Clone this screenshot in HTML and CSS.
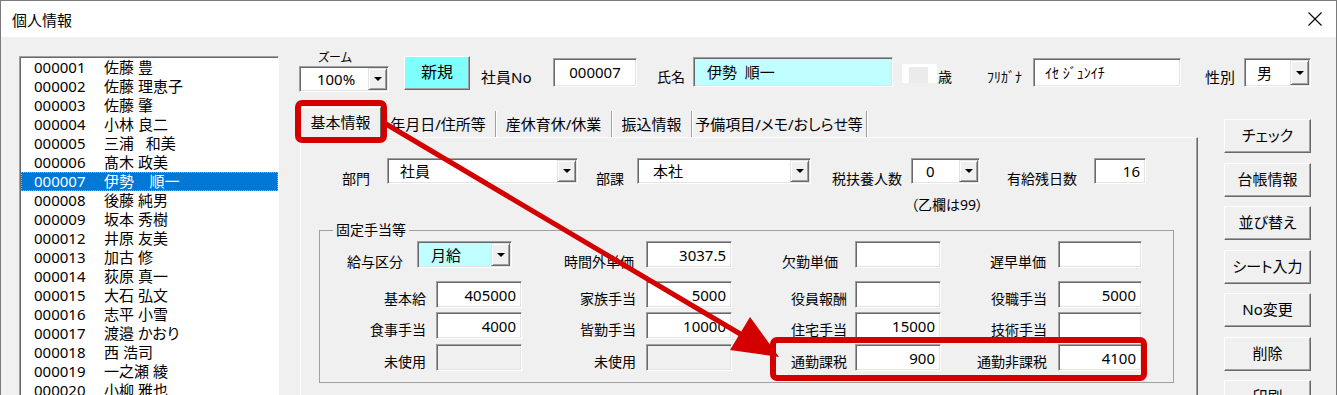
FILE: index.html
```html
<!DOCTYPE html>
<html lang="ja">

<head>
    <meta charset="UTF-8">
    <title>個人情報</title>
    <link rel="stylesheet" href="styles.css">
</head>

<body>
    <div class="window">
        <div class="titlebar">
            <span class="title">個人情報</span>
            <svg class="close" width="14" height="14" viewBox="0 0 14 14">
                <path d="M0.5 0.5L13.5 13.5M13.5 0.5L0.5 13.5" stroke="#000" stroke-width="1.1" fill="none" />
            </svg>
        </div>
        <div class="client">
            <ul class="list" id="list"></ul>

            <div class="main">
                <div class="topbar">
                    <div class="zoom">
                        <div class="zoom-label">ズーム</div>
                        <div class="combo zoom-combo"><span class="val">100%</span><span class="drop"></span></div>
                    </div>
                    <div class="btn btn-new">新規</div>
                    <div class="lbl lbl-no">社員No</div>
                    <div class="box box-no">000007</div>
                    <div class="lbl lbl-name">氏名</div>
                    <div class="box box-name">伊勢  順一</div>
                    <div class="age"><div class="age-in"></div></div>
                    <div class="lbl lbl-age">歳</div>
                    <div class="lbl lbl-kana">ﾌﾘｶﾞﾅ</div>
                    <div class="box box-kana">ｲｾ ｼﾞｭﾝｲﾁ</div>
                    <div class="lbl lbl-sex">性別</div>
                    <div class="combo combo-sex"><span class="val">男</span><span class="drop"></span></div>
                </div>

                <div class="lower">
                    <div class="tabs">
                        <div class="tabstrip">
                            <div class="tab on t1">基本情報</div>
                            <div class="tab t2">年月日/住所等</div>
                            <div class="tab t3">産休育休/休業</div>
                            <div class="tab t4">振込情報</div>
                            <div class="tab t5">予備項目/メモ/おしらせ等</div>
                        </div>
                        <div class="panel">
                            <div class="row-top">
                                <div class="plbl w-bumon">部門</div>
                                <div class="combo c-bumon"><span class="val">社員</span><span class="drop"></span></div>
                                <div class="plbl w-buka">部課</div>
                                <div class="combo c-buka"><span class="val">本社</span><span class="drop"></span></div>
                                <div class="plbl w-fuyo">税扶養人数</div>
                                <div class="combo c-fuyo"><span class="val">0</span><span class="drop"></span></div>
                                <div class="plbl w-yukyu">有給残日数</div>
                                <div class="box num b-yukyu">16</div>
                            </div>
                            <div class="note">（乙欄は99）</div>

                            <fieldset class="group">
                                <legend>固定手当等</legend>
                                <div class="grid">
                                    <div class="glbl c1 r1k">給与区分</div>
                                    <div class="combo c-kyuyo"><span class="val">月給</span><span class="drop"></span></div>
                                    <div class="glbl c2 r1j">時間外単価</div>
                                    <div class="box num">3037.5</div>
                                    <div class="glbl c3 r1a">欠勤単価</div>
                                    <div class="box num"></div>
                                    <div class="glbl c4 r1">遅早単価</div>
                                    <div class="box num"></div>

                                    <div class="glbl c1">基本給</div>
                                    <div class="box num">405000</div>
                                    <div class="glbl c2">家族手当</div>
                                    <div class="box num">5000</div>
                                    <div class="glbl c3">役員報酬</div>
                                    <div class="box num"></div>
                                    <div class="glbl c4">役職手当</div>
                                    <div class="box num">5000</div>

                                    <div class="glbl c1">食事手当</div>
                                    <div class="box num">4000</div>
                                    <div class="glbl c2">皆勤手当</div>
                                    <div class="box num">10000</div>
                                    <div class="glbl c3">住宅手当</div>
                                    <div class="box num">15000</div>
                                    <div class="glbl c4">技術手当</div>
                                    <div class="box num"></div>

                                    <div class="glbl c1">未使用</div>
                                    <div class="box off"></div>
                                    <div class="glbl c2">未使用</div>
                                    <div class="box off"></div>
                                    <div class="glbl c3">通勤課税</div>
                                    <div class="box num">900</div>
                                    <div class="glbl c4">通勤非課税</div>
                                    <div class="box num">4100</div>
                                </div>
                            </fieldset>
                        </div>
                    </div>

                    <div class="side">
                        <div class="btn btn-side">チェック</div>
                        <div class="btn btn-side">台帳情報</div>
                        <div class="btn btn-side">並び替え</div>
                        <div class="btn btn-side">シート入力</div>
                        <div class="btn btn-side">No変更</div>
                        <div class="btn btn-side">削除</div>
                        <div class="btn btn-side">印刷</div>
                    </div>
                </div>
            </div>
        </div>
    </div>

    <!-- 注釈（赤枠と矢印） -->
    <svg class="notes" width="1337" height="395" viewBox="0 0 1337 395">
        <rect x="298" y="103" width="86" height="37" rx="4" fill="none" stroke="#d40000" stroke-width="6" />
        <rect x="773" y="340" width="371" height="38" rx="4" fill="none" stroke="#d40000" stroke-width="6" />
        <line x1="386" y1="124" x2="742" y2="335" stroke="#d40000" stroke-width="5" />
        <polygon points="779,357 730,350 750,317" fill="#d40000" />
    </svg>

    <script>
        var list = document.getElementById('list');
        var data = [
            ['000001', '佐藤 豊'],
            ['000002', '佐藤 理恵子'],
            ['000003', '佐藤 肇'],
            ['000004', '小林 良二'],
            ['000005', '三浦   和美'],
            ['000006', '髙木 政美'],
            ['000007', '伊勢    順一'],
            ['000008', '後藤 純男'],
            ['000009', '坂本 秀樹'],
            ['000012', '井原 友美'],
            ['000013', '加古 修'],
            ['000014', '荻原 真一'],
            ['000015', '大石 弘文'],
            ['000016', '志平 小雪'],
            ['000017', '渡邉 かおり'],
            ['000018', '西 浩司'],
            ['000019', '一之瀬 綾'],
            ['000020', '小柳 雅也']
        ];
        //一覧を描画
        list.innerHTML = data.map(function(item, index) {
            var cls = index == 6 ? ' class="sel"' : '';
            return `<li${cls}><span class="code">${item[0]}</span>${item[1]}</li>`;
        }).join('');
    </script>
</body>

</html>
```

FILE: styles.css
```css
* {
    padding: 0;
    margin: 0;
    box-sizing: border-box;
}

body {
    font-family: "Noto Sans", "Noto Sans CJK JP", sans-serif;
    font-size: 14px;
    font-feature-settings: "palt";
    color: #000;
    background: #fff;
}

.window {
    width: 1337px;
    height: 395px;
    border: 1px solid #7a7a7a;
    border-bottom: none;
    overflow: hidden;
    background: #f0f0f0;
}

.titlebar {
    height: 36px;
    background: #fff;
    display: flex;
    align-items: center;
    justify-content: space-between;
    padding: 0 14px 0 11px;
    font-size: 15px;
}

.close {
    display: block;
}

.client {
    display: flex;
    height: 358px;
    padding-left: 18px;
    overflow: hidden;
}

/* 社員一覧 */
.list {
    list-style: none;
    width: 260px;
    height: 345px;
    margin-top: 19px;
    padding: 1px 0 0 1px;
    background: #fff;
    border: 1px solid;
    border-color: #a0a0a0 #fff #fff #a0a0a0;
    box-shadow: inset 1px 1px #696969;
    font-size: 15px;
    flex-shrink: 0;
}

.list li {
    height: 19px;
    line-height: 19px;
    padding-left: 13px;
    white-space: pre;
}

.list li.sel {
    background: #0078d7;
    color: #fff;
    outline: 1px dotted #d8a656;
    outline-offset: -1px;
}

.code {
    display: inline-block;
    width: 70px;
}

.main {
    margin: 12px 0 0 20px;
}

/* 共通部品 */
.box {
    background: #fff;
    border: 1px solid;
    border-color: #a0a0a0 #fff #fff #a0a0a0;
    box-shadow: inset 1px 1px #696969, inset -1px -1px #e3e3e3;
    font-size: 15px;
    white-space: pre;
}

.box.num {
    text-align: right;
    padding: 3px 5px 0 0;
    line-height: 20px;
    height: 27px;
}

.box.off {
    background: #f0f0f0;
    height: 27px;
}

.combo {
    display: flex;
    background: #fff;
    border: 1px solid;
    border-color: #a0a0a0 #fff #fff #a0a0a0;
    box-shadow: inset 1px 1px #696969, inset -1px -1px #e3e3e3;
    font-size: 15px;
}

.combo .val {
    flex: 1;
    align-self: center;
    line-height: 18px;
}

.drop {
    width: 19px;
    margin: 1px 1px 1px 0;
    background: #f0f0f0;
    border: 1px solid;
    border-color: #e3e3e3 #696969 #696969 #e3e3e3;
    box-shadow: inset 1px 1px #fff, inset -1px -1px #a0a0a0;
    display: flex;
    align-items: center;
    justify-content: center;
}

.drop::after {
    content: "";
    border-left: 4px solid transparent;
    border-right: 4px solid transparent;
    border-top: 4px solid #000;
}

.btn {
    background: #f0f0f0;
    border: 1px solid;
    border-color: #fff #696969 #696969 #fff;
    box-shadow: inset -1px -1px #a0a0a0;
    text-align: center;
}

.lbl {
    line-height: 18px;
    margin-top: 19px;
}

/* 上部 */
.topbar {
    display: flex;
    align-items: flex-start;
    height: 58px;
}

.zoom {
    width: 90px;
}

.zoom-label {
    font-size: 12px;
    line-height: 14px;
    margin-top: 2px;
    padding-left: 19px;
}

.zoom-combo {
    margin-top: 1px;
    height: 26px;
}

.zoom-combo .val {
    text-align: center;
    padding-left: 4px;
}

.btn-new {
    margin: 7px 0 0 15px;
    width: 66px;
    height: 34px;
    line-height: 31px;
    background: #80ffff;
    font-size: 16px;
}

.lbl-no {
    width: 83px;
    padding-left: 11px;
    font-size: 15px;
}

.box-no {
    margin-top: 9px;
    width: 84px;
    height: 29px;
    line-height: 27px;
    text-align: center;
}

.lbl-name {
    width: 56px;
    text-align: right;
    padding-right: 8px;
}

.box-name {
    margin-top: 8px;
    width: 200px;
    height: 30px;
    line-height: 28px;
    padding-left: 13px;
    background: #c0ffff;
}

.age {
    margin: 15px 0 0 9px;
    width: 35px;
    height: 19px;
    background: #fff;
    padding: 3px 0 0 7px;
}

.age-in {
    width: 19px;
    height: 16px;
    background: #ebebeb;
}

.lbl-age {
    width: 50px;
    padding-left: 1px;
}

.lbl-kana {
    width: 46px;
}

.box-kana {
    margin-top: 9px;
    width: 148px;
    height: 29px;
    line-height: 27px;
    padding-left: 11px;
    font-size: 14px;
}

.lbl-sex {
    width: 63px;
    text-align: right;
    padding-right: 9px;
    font-size: 15px;
}

.combo-sex {
    margin-top: 9px;
    width: 67px;
    height: 29px;
}

.combo-sex .val {
    padding-left: 12px;
}

/* タブ */
.lower {
    display: flex;
}

.tabs {
    margin-left: 1px;
    width: 898px;
}

.tabstrip {
    display: flex;
    align-items: flex-end;
    height: 30px;
}

.tab {
    height: 26px;
    line-height: 26px;
    text-align: center;
    font-size: 15px;
    border-right: 1px solid #a0a0a0;
    box-shadow: 1px 0 #fff;
}

.tab.on {
    height: 30px;
    line-height: 28px;
    border-top: 1px solid #fff;
    border-left: 1px solid #fff;
    border-right: 1px solid #696969;
    box-shadow: none;
}

.t1 { width: 81px; }
.t2 { width: 115px; }
.t3 { width: 116px; }
.t4 { width: 80px; }
.t5 { width: 175px; }

.panel {
    height: 260px;
    border-top: 1px solid #fff;
    border-left: 1px solid #fff;
    border-right: 1px solid #696969;
    box-shadow: inset -1px 0 #a0a0a0;
    padding-top: 20px;
}

.row-top {
    display: flex;
    align-items: flex-end;
    height: 26px;
}

.row-top .combo,
.row-top .box {
    height: 26px;
}

.plbl {
    line-height: 18px;
    margin-bottom: -4px;
    text-align: right;
}

.w-bumon { width: 86px; padding-right: 17px; }
.w-buka { width: 59px; padding-right: 13px; }
.w-fuyo { width: 100px; padding-right: 9px; }
.w-yukyu { width: 114px; padding-right: 17px; }

.c-bumon { width: 191px; }
.c-buka { width: 174px; }
.c-fuyo { width: 69px; }

.c-bumon .val { padding-left: 12px; }
.c-buka .val { padding-left: 15px; }
.c-fuyo .val { padding-left: 14px; }

.b-yukyu {
    width: 52px;
}

.row-top .box.num {
    padding-top: 2px;
}

.note {
    margin: 12px 0 0 610px;
    line-height: 18px;
}

/* 固定手当等 */
.group {
    margin: 8px 0 0 18px;
    width: 855px;
    min-width: 0;
    border: 1px solid #a0a0a0;
    padding: 0 31px 11px 0;
}

.group legend {
    margin-left: 13px;
    padding: 0 3px;
    line-height: 16px;
}

.grid {
    display: grid;
    grid-template-columns: 116px 86px 124px 86px 123px 86px 117px 84px;
    grid-template-rows: 27px 40px 31px 32px;
    align-items: end;
    margin-top: 3px;
}

.glbl {
    text-align: right;
    line-height: 18px;
}

.c1 { padding-right: 10px; }
.c2 { padding-right: 10px; }
.c3 { padding-right: 8px; }
.c4 { padding-right: 11px; }

.r1, .r1k, .r1j, .r1a {
    margin-bottom: -3px;
}

.r1k { padding-right: 33px; }
.r1j { padding-right: 12px; }
.r1a { padding-right: 17px; }
.r1 { padding-right: 12px; }

.c-kyuyo {
    margin-left: -19px;
    width: 95px;
    height: 27px;
    background: #c0ffff;
}

.c-kyuyo .val {
    padding-left: 13px;
}

/* 右側ボタン */
.side {
    margin: 12px 0 0 26px;
    display: flex;
    flex-direction: column;
    gap: 9.5px;
}

.btn-side {
    width: 87px;
    height: 34px;
    line-height: 31px;
    font-size: 15px;
    flex-shrink: 0;
}

.notes {
    position: absolute;
    top: 0;
    left: 0;
    pointer-events: none;
}
```
